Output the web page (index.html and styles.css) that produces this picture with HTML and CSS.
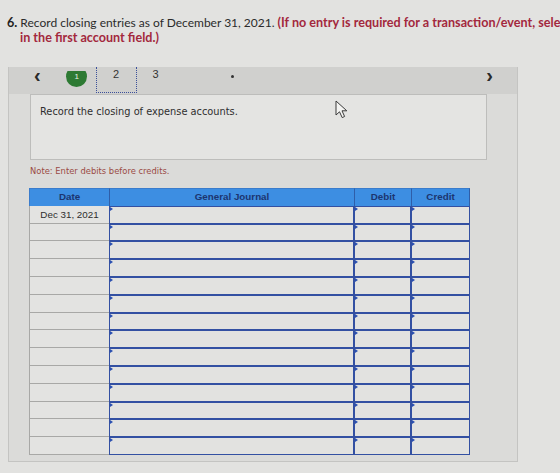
FILE: index.html
```html
<!DOCTYPE html>
<html lang="en">
<head>
<meta charset="utf-8">
<title>Closing entries</title>
<link rel="stylesheet" href="styles.css">
</head>
<body>
  <div class="question">
    <span class="line first"><b class="num">6.</b> Record closing entries as of December 31, 2021. <b class="req">(If no entry is required for a transaction/event, select</b></span>
    <span class="line second req">in the first account field.)</span>
  </div>

  <section class="panel">
    <nav class="steps">
      <span class="arrow prev">&lsaquo;</span>
      <span class="step done"><span class="dot">1</span></span>
      <span class="step current">2</span>
      <span class="step">3</span>
      <span class="mark"></span>
      <span class="arrow next">&rsaquo;</span>
    </nav>

    <div class="prompt">
      <p>Record the closing of expense accounts.</p>
      <svg class="cursor" width="16" height="20" viewBox="0 0 16 20">
        <path d="M1 1 L1 15 L4.5 11.8 L7.2 17.6 L9.6 16.5 L7 10.8 L11.8 10.8 Z" fill="#f4f4f2" stroke="#3a3a3a" stroke-width="1" stroke-linejoin="round"/>
      </svg>
    </div>

    <p class="note">Note: Enter debits before credits.</p>

    <div class="journal" id="journal">
      <div class="head">Date</div>
      <div class="head">General Journal</div>
      <div class="head">Debit</div>
      <div class="head">Credit</div>
    </div>
  </section>

  <script src="app.js"></script>
</body>
</html>
```

FILE: app.js
```js
// Build the 14 entry rows of the journal grid.
(function () {
  var grid = document.getElementById('journal');
  for (var i = 0; i < 14; i++) {
    var date = document.createElement('div');
    date.className = 'date';
    date.textContent = i === 0 ? 'Dec 31, 2021' : '';
    grid.appendChild(date);
    for (var c = 0; c < 3; c++) {
      var cell = document.createElement('div');
      cell.className = 'entry';
      grid.appendChild(cell);
    }
  }
})();
```

FILE: styles.css
```css
html, body {
  margin: 0;
  padding: 0;
}

body {
  width: 560px;
  height: 473px;
  overflow: hidden;
  background: #e2e2e0;
  font-family: Lato, "Open Sans", sans-serif;
  color: #2b2b2b;
}

/* question heading */
.question {
  padding: 15px 0 0 7px;
  font-size: 12px;
  line-height: 15px;
}

.line {
  display: block;
  white-space: nowrap;
}

.line.second {
  padding-left: 13px;
}

.num {
  font-weight: 700;
  font-size: 12.6px;
  color: #222;
}

.req {
  font-weight: 700;
  font-size: 12.6px;
  color: #a3283d;
}

/* problem panel */
.panel {
  margin: 22px 0 0 8px;
  width: 508px;
  height: 394px;
  background: #dbdbd9;
  border: 1px solid #c4c4c2;
  border-top: none;
  position: relative;
}

.steps {
  height: 27px;
  background: #d0d0ce;
  display: flex;
  align-items: flex-start;
  font-family: "Liberation Sans", Arial, sans-serif;
  font-size: 11px;
  color: #333;
}

.arrow {
  font-size: 20px;
  line-height: 14px;
  font-weight: 700;
  color: #2a2a2a;
}

.arrow.prev {
  margin: 1px 0 0 25px;
}

.arrow.next {
  margin: 1px 24px 0 auto;
}

.step {
  width: 38px;
  height: 26px;
  text-align: center;
  line-height: 14px;
  box-sizing: border-box;
}

.step.done {
  margin-left: 24px;
  width: 24px;
  height: 16px;
  overflow: hidden;
  margin-top: 4px;
}

.dot {
  display: block;
  width: 21px;
  height: 21px;
  border-radius: 50%;
  background: #2d7a33;
  color: #e8f0e8;
  font-size: 8px;
  line-height: 21px;
  margin: -5px auto 0;
}

.step.current {
  width: 41px;
  margin-left: 7px;
  border: 1px dotted #3a4f9a;
  border-top: none;
}

.mark {
  width: 3px;
  height: 3px;
  border-radius: 50%;
  background: #333;
  margin: 8px 0 0 56px;
}

.prompt {
  margin-left: 21px;
  width: 455px;
  height: 64px;
  border: 1px solid #bdbdbb;
  background: #e4e4e2;
  position: relative;
}

.prompt p {
  margin: 11px 0 0 9px;
  font-family: "DejaVu Sans", Verdana, sans-serif;
  font-size: 9.8px;
  color: #2e2e2e;
}

.cursor {
  position: absolute;
  left: 304px;
  top: 5px;
}

.note {
  margin: 6px 0 0 21px;
  font-family: "DejaVu Sans", Verdana, sans-serif;
  font-size: 8.4px;
  color: #9a4a44;
}

/* journal grid */
.journal {
  margin: 12px 0 0 20px;
  width: 441px;
  display: grid;
  grid-template-columns: 80px 245px 57px 59px;
  grid-auto-rows: 17.8px;
  font-family: "Liberation Sans", Arial, sans-serif;
}

.head {
  height: 18px;
  background: #3d8ee2;
  color: #1c356f;
  font-size: 9.8px;
  font-weight: 700;
  text-align: center;
  line-height: 16px;
  border-left: 1px solid #2f5ea8;
  border-top: 1px solid #3a7ccc;
  box-sizing: border-box;
}

.head:first-child {
  border-left: 1px solid #3a7ccc;
}

.head:nth-child(4) {
  border-right: 1px solid #2f5ea8;
}

.date {
  background: #e3e3e1;
  border-left: 1px solid #a8a8a6;
  border-bottom: 1px solid #a8a8a6;
  font-size: 9.8px;
  line-height: 17px;
  text-align: center;
  color: #2e2e2e;
}

.entry {
  background: #e2e2e0;
  border: 1px solid #3350a2;
  position: relative;
}

.entry::before {
  content: "";
  position: absolute;
  left: 0;
  top: 0;
  border-left: 3px solid #2a4fb0;
  border-top: 2px solid transparent;
  border-bottom: 2px solid transparent;
}
```
